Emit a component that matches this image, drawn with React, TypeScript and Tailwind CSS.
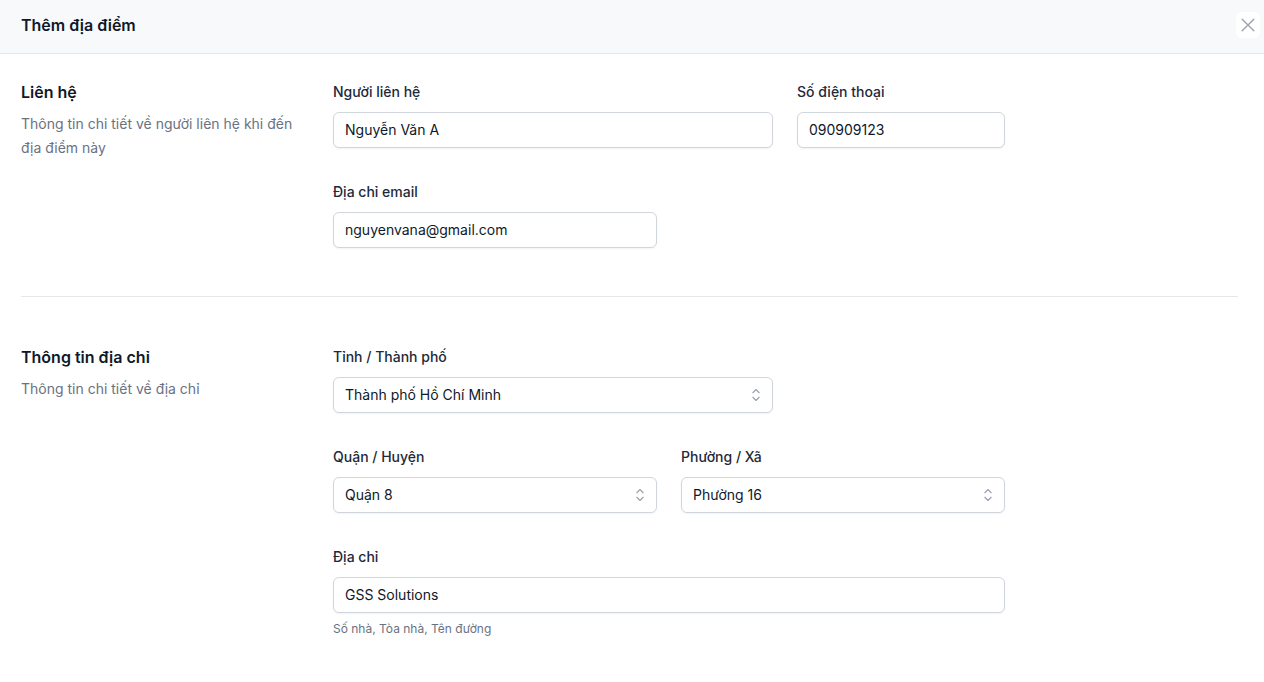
import { ReactNode } from 'react'

const Label = ({ children }: { children: ReactNode }) => (
	<label className="block text-sm font-medium leading-6 text-gray-800">{children}</label>
)

const TextInput = ({ value }: { value: string }) => (
	<input
		type="text"
		defaultValue={value}
		className="mt-2 block w-full rounded-md border border-gray-300 bg-white px-[11px] py-1.5 text-sm leading-[22px] text-gray-900 shadow-xs outline-none"
	/>
)

const UpDown = () => (
	<svg className="h-5 w-5 text-gray-400" viewBox="0 0 16 16" fill="none" stroke="currentColor" strokeWidth="0.9" aria-hidden="true">
		<path strokeLinecap="round" strokeLinejoin="round" d="M5.5 6.2l2.5-2.6 2.5 2.6M5.5 9.8l2.5 2.6 2.5-2.6" />
	</svg>
)

const Select = ({ value }: { value: string }) => (
	<div className="mt-2 flex h-9 w-full items-center justify-between rounded-md border border-gray-300 bg-white pl-[11px] pr-1.5 text-sm text-gray-900 shadow-xs">
		<span>{value}</span>
		<UpDown />
	</div>
)

const SectionIntro = ({ title, text }: { title: string; text: string }) => (
	<div>
		<h2 className="text-base font-semibold leading-6 text-gray-900">{title}</h2>
		<p className="mt-2 text-sm leading-6 text-gray-500">{text}</p>
	</div>
)

export default function App() {
	return (
		<div className="min-h-screen bg-white font-['Inter',sans-serif]">
			<header className="flex h-[54px] items-center justify-between border-b border-gray-200 bg-[#f8f9fb] pb-[3px] pl-[21px] pr-1">
				<h1 className="text-base font-semibold text-gray-900">Thêm địa điểm</h1>
				<button type="button" className="flex h-[26px] w-6 items-center justify-center rounded-md bg-white text-gray-400">
					<svg className="h-5 w-5" viewBox="0 0 24 24" fill="none" stroke="currentColor" strokeWidth="1.6" aria-hidden="true">
						<path strokeLinecap="round" strokeLinejoin="round" d="M5 5l14 14M19 5L5 19" />
					</svg>
				</button>
			</header>

			<div className="pl-[21px] pr-[26px]">
				<section className="grid grid-cols-[280px_1fr] gap-x-8 border-b border-gray-200 pb-12 pt-[26px]">
					<SectionIntro title="Liên hệ" text="Thông tin chi tiết về người liên hệ khi đến địa điểm này" />
					<div className="grid max-w-[672px] grid-cols-6 gap-x-6 gap-y-8">
						<div className="col-span-4">
							<Label>Người liên hệ</Label>
							<TextInput value="Nguyễn Văn A" />
						</div>
						<div className="col-span-2">
							<Label>Số điện thoại</Label>
							<TextInput value="090909123" />
						</div>
						<div className="col-span-3">
							<Label>Địa chỉ email</Label>
							<TextInput value="nguyenvana@gmail.com" />
						</div>
					</div>
				</section>

				<section className="grid grid-cols-[280px_1fr] gap-x-8 pb-10 pt-12">
					<SectionIntro title="Thông tin địa chỉ" text="Thông tin chi tiết về địa chỉ" />
					<div className="grid max-w-[672px] grid-cols-6 gap-x-6 gap-y-8">
						<div className="col-span-4">
							<Label>Tỉnh / Thành phố</Label>
							<Select value="Thành phố Hồ Chí Minh" />
						</div>
						<div className="col-span-2" />
						<div className="col-span-3">
							<Label>Quận / Huyện</Label>
							<Select value="Quận 8" />
						</div>
						<div className="col-span-3">
							<Label>Phường / Xã</Label>
							<Select value="Phường 16" />
						</div>
						<div className="col-span-6">
							<Label>Địa chỉ</Label>
							<TextInput value="GSS Solutions" />
							<p className="mt-2 text-xs leading-4 text-gray-500">Số nhà, Tòa nhà, Tên đường</p>
						</div>
					</div>
				</section>
			</div>
		</div>
	)
}
